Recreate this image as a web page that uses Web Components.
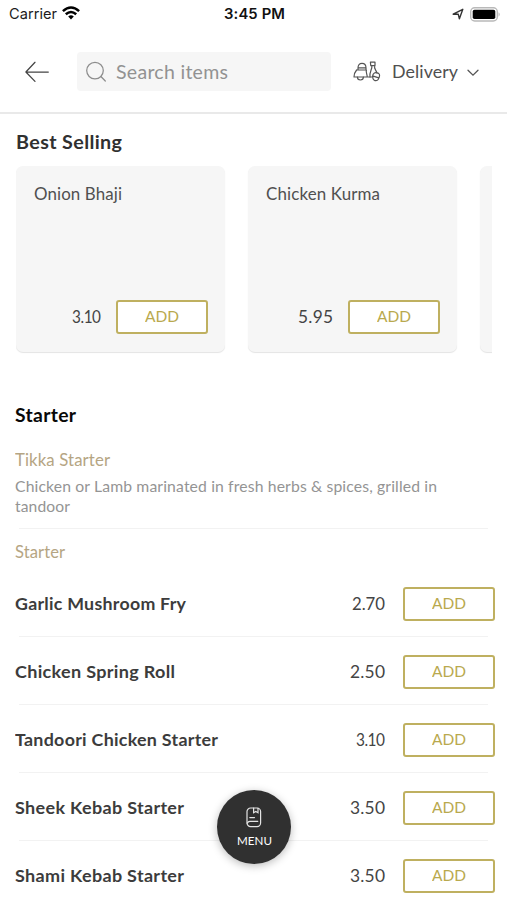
<!DOCTYPE html>
<html lang="en">
<head>
<meta charset="utf-8">
<title>Menu</title>
<style>
html,body{margin:0;height:900px;overflow:hidden;background:#fff}
body{font-family:Lato,"Open Sans",sans-serif;color:#444}
</style>
</head>
<body>
<menu-app></menu-app>
<script>
const define = (name, html, setup) => {
  const t = document.createElement('template');
  t.innerHTML = html;
  customElements.define(name, class extends HTMLElement {
    connectedCallback() {
      if (this.shadowRoot) return;
      const root = this.attachShadow({ mode: 'open' });
      root.append(t.content.cloneNode(true));
      if (setup) setup(this, root);
    }
  });
};

// One line of text that spans the width given in "span": the glyphs are
// widened for most of the difference and tracking takes up the rest.
define('tracked-text', `<style>:host{display:block;white-space:nowrap}span{display:inline-block;transform-origin:0 50%}</style><span><slot></slot></span>`, (el, root) => {
  const s = root.querySelector('span');
  const target = parseFloat(el.getAttribute('span'));
  const n = el.textContent.length;
  if (!target || n < 2) return;
  el.style.width = target + 'px';
  const natural = s.getBoundingClientRect().width;
  const scale = 1 + (target / natural - 1) * .65;
  const gap = (target / scale - natural) / (n - 1);
  s.style.letterSpacing = gap + 'px';
  s.style.transform = 'scaleX(' + scale + ')';
});

define('status-bar', `<style>
:host{display:grid;grid-template-columns:1fr auto 1fr;align-items:center;height:28px;padding:0 6px 0 9px;box-sizing:border-box;font:400 14.5px/28px Inter,sans-serif;color:#1c1c1c}
.l,.r{display:flex;align-items:center}.l{gap:5px}.r{justify-content:flex-end;gap:6px}
.t{font-weight:600;font-size:14.5px;color:#111;margin-left:-2px}svg{display:block}
</style>
<div class="l"><tracked-text span="48">Carrier</tracked-text>
<svg width="18" height="14" viewBox="0 0 18 14" fill="none" stroke="#000" stroke-width="2.5" style="margin-top:-3px"><path d="M.9 5.2Q9-2.2 17.1 5.2"/><path d="M3.8 8.3Q9 3.7 14.2 8.3"/><path d="M6.2 10.4Q9 8.2 11.8 10.4L9 13.4z" fill="#000" stroke="none"/></svg></div>
<div class="t"><tracked-text span="61">3:45 PM</tracked-text></div>
<div class="r"><svg width="12" height="12" viewBox="0 0 12 12" fill="none" stroke="#333" stroke-width="1.4" stroke-linejoin="round"><path d="M1.2 6.2 10.8 1.3 7.4 10.8 6.3 6.3z"/></svg>
<svg width="31" height="15" viewBox="0 0 31 15"><rect x=".7" y=".8" width="26.6" height="13.2" rx="4" fill="#fff" stroke="#b9b9b9" stroke-width="1.4"/><rect x="2.7" y="2.7" width="22.6" height="9.4" rx="1.8" fill="#000"/><path d="M28.6 5.2q2 2.2 0 4.5z" fill="#aaa"/></svg></div>`);

define('search-field', `<style>
:host{display:flex;align-items:center;gap:9px;width:254px;height:39px;padding-left:8px;box-sizing:border-box;border-radius:4px;background:#f6f6f6;color:#929292;font-size:18.5px;line-height:38px}
</style><svg width="22" height="22" viewBox="0 0 22 22" fill="none" stroke="#8d8d8d" stroke-width="1.25" stroke-linecap="round"><circle cx="10" cy="9.6" r="8.3"/><path d="m15.9 15.5 4.4 4.5"/></svg><tracked-text span="112">Search items</tracked-text>`);

define('delivery-picker', `<style>
:host{display:flex;align-items:center;font-size:17.5px;line-height:38px;color:#505050}
tracked-text{margin-left:11px}.c{margin:3px 0 0 9px}
</style><svg width="28" height="21" viewBox="0 0 28 21" fill="none" stroke="#555" stroke-width="1.2" stroke-linejoin="round" stroke-linecap="round"><path d="M5 8.6V7C5 4.2 6.4 2.4 9 2.4S13 4.2 13 7V8.6M5 6.8H13M3.6 9H13.4M3.6 9C1.9 11 1 13.4 1 16H14.2M13.4 9C12.6 11.6 14.4 13.3 14.2 16H19.4C19.9 11.7 22 10.8 25.6 12.4 27.2 13.7 26.6 16 25.6 17"/><path d="M4.4 16a3 3 0 0 0 6 0M20.2 15.2a3 3 0 1 0 5.6 1.6L20.2 15.2"/><path d="M17.4 1.2H22V4.6H17.8zM18.8 4.6C19.6 8 16.2 10.4 17 16M21.8 4.6C20.6 7.6 23 8.8 23.9 11.8"/></svg><tracked-text span="66">Delivery</tracked-text><svg class="c" width="12" height="8" viewBox="0 0 12 8" fill="none" stroke="#555" stroke-width="1.3" stroke-linecap="round"><path d="m1 1.2 5 5 5-5"/></svg>`);

define('app-header', `<style>
:host{display:flex;align-items:center;height:86px;padding-left:25px;box-sizing:border-box;border-bottom:2px solid #e9e9e9}
search-field{margin-left:28px}delivery-picker{margin-left:22px}
div{display:flex;align-items:center;margin-top:3px}
</style><div><svg width="24" height="22" viewBox="0 0 24 22" fill="none" stroke="#444" stroke-width="1.25" stroke-linecap="round" stroke-linejoin="round"><path d="M10 1.3 .9 11 10 20.4M1 11H23.3"/></svg><search-field></search-field><delivery-picker></delivery-picker></div>`);

define('add-button', `<style>
:host{display:flex;align-items:center;justify-content:center;width:92px;height:34px;box-sizing:border-box;border:2px solid #bfb060;border-radius:3px;background:#fff;color:#b9a94e;font-size:15.5px;line-height:28px;padding-bottom:2px}
</style><tracked-text span="34">ADD</tracked-text>`);

define('dish-card', `<style>
:host{display:flex;flex-direction:column;justify-content:space-between;flex:none;width:209px;height:186px;box-sizing:border-box;padding:16px 17px 18px 18px;border-radius:7px;background:#f6f6f6;box-shadow:0 1px 1px #0000001c;font-size:16.5px;line-height:24px;color:#505050}
div{display:flex;align-items:center;justify-content:flex-end;gap:15px;color:#444}
</style><tracked-text></tracked-text><div><tracked-text></tracked-text><add-button></add-button></div>`, (el, root) => {
  const [a, b] = root.querySelectorAll('tracked-text');
  fill(a, el.getAttribute('name'), el.getAttribute('name-span'));
  fill(b, el.getAttribute('price'), el.getAttribute('price-span'));
  if (!el.hasAttribute('name')) root.querySelector('div').remove();
});

// Replaces a text line with one that is tracked to its own span.
function fill(node, text, span) {
  if (!text) { node.remove(); return; }
  const t = document.createElement('tracked-text');
  t.textContent = text;
  t.setAttribute('span', span);
  node.replaceWith(t);
}

define('dish-row', `<style>
:host{display:flex;align-items:center;height:68.1px;box-sizing:border-box;padding:0 12px 0 15px;font-size:16.8px;line-height:24px;color:#3c3c3c;background:linear-gradient(#f2f2f2,#f2f2f2) 19px 66px/469px 1px no-repeat}
.n{font-weight:700;flex:1}.p{margin-right:18px;color:#444}
.n,.p{margin-top:-1px}
</style><div class="n"><tracked-text></tracked-text></div><div class="p"><tracked-text></tracked-text></div><add-button></add-button>`, (el, root) => {
  const [a, b] = root.querySelectorAll('tracked-text');
  fill(a, el.getAttribute('name'), el.getAttribute('name-span'));
  fill(b, el.getAttribute('price'), el.getAttribute('price-span'));
});

define('menu-button', `<style>
:host{position:absolute;left:217px;top:790px;display:flex;flex-direction:column;align-items:center;width:74px;height:74px;padding-top:17px;box-sizing:border-box;border-radius:50%;background:#303030;box-shadow:0 2px 8px #0004;color:#fff;font-size:11.5px;line-height:16px}
svg{margin-bottom:5px}
</style><svg width="16" height="21" viewBox="0 0 16 21" fill="none" stroke="#e4e4e4" stroke-width="1.2" stroke-linecap="round"><rect x="1" y="1" width="13.6" height="18.6" rx="3.6"/><path d="M7.6 1V5.7L9.8 4.4 12 5.7V1.3M3.8 10.6H8.5M3.8 14.3H11.8M1.2 16.3Q2 14.3 3.8 14.3"/></svg><tracked-text span="35">MENU</tracked-text>`);

define('menu-app', `<style>
:host{display:block;position:relative;width:507px;height:900px;overflow:hidden}
h2{margin:0;font-size:18.2px;line-height:24px;font-weight:700}
.best{padding:16px 0 0 16px;color:#303030}
.cards{display:flex;gap:23px;width:476px;padding:12px 0 5px;overflow:hidden;box-sizing:border-box}
.start{padding:46px 0 0 15px;color:#080808}
.sub{font-size:16.3px;line-height:24px;color:#b5a583}
.desc{font-size:15.2px;line-height:20px;color:#949494;padding-top:4px}
.group{padding:21px 0 0 15px}
.rule{height:1px;background:#f2f2f2;margin:12px 19px 0}
.group2{padding:11px 0 6px 15px}
</style>
<status-bar></status-bar><app-header></app-header>
<section class="best"><h2><tracked-text span="106">Best Selling</tracked-text></h2>
<div class="cards"><dish-card name="Onion Bhaji" name-span="88" price="3.10" price-span="29"></dish-card><dish-card name="Chicken Kurma" name-span="114" price="5.95" price-span="35"></dish-card><dish-card></dish-card></div></section>
<section class="start"><h2><tracked-text span="61">Starter</tracked-text></h2></section>
<section class="group"><div class="sub"><tracked-text span="95">Tikka Starter</tracked-text></div>
<div class="desc"><tracked-text span="422">Chicken or Lamb marinated in fresh herbs &amp; spices, grilled in</tracked-text><tracked-text span="55">tandoor</tracked-text></div></section>
<div class="rule"></div>
<div class="group2 sub"><tracked-text span="50">Starter</tracked-text></div>
<dish-row name="Garlic Mushroom Fry" name-span="171" price="2.70" price-span="33"></dish-row>
<dish-row name="Chicken Spring Roll" name-span="160" price="2.50" price-span="35"></dish-row>
<dish-row name="Tandoori Chicken Starter" name-span="203" price="3.10" price-span="29"></dish-row>
<dish-row name="Sheek Kebab Starter" name-span="169" price="3.50" price-span="35"></dish-row>
<dish-row name="Shami Kebab Starter" name-span="169" price="3.50" price-span="35"></dish-row>
<menu-button></menu-button>`);
</script>
</body>
</html>
